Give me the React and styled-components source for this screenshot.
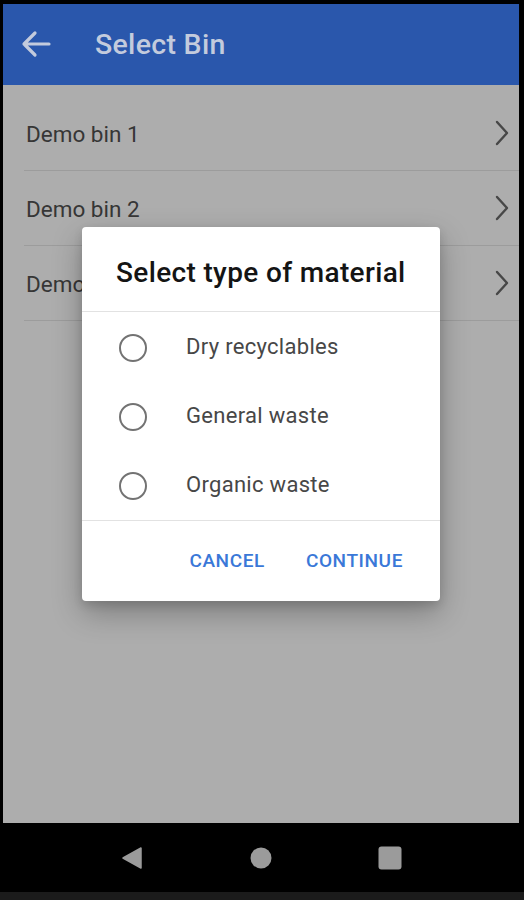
import React from 'react';
import styled, { createGlobalStyle } from 'styled-components';

const GlobalStyle = createGlobalStyle`
  html, body {
    margin: 0;
    padding: 0;
    background: #000;
  }
  * {
    box-sizing: border-box;
  }
`;

const Device = styled.div`
  width: 524px;
  height: 900px;
  background: #000;
  display: flex;
  flex-direction: column;
  font-family: Roboto, "Noto Sans", sans-serif;
  overflow: hidden;
`;

const Screen = styled.div`
  flex: 1;
  margin: 4px 5px 0 3px;
  display: flex;
  flex-direction: column;
  min-height: 0;
`;

const AppBar = styled.header`
  height: 81px;
  background: #2a57ac;
  display: flex;
  align-items: center;
  padding-left: 15px;
  gap: 41px;
  flex-shrink: 0;
`;

const BackButton = styled.div`
  width: 36px;
  height: 36px;
  display: flex;
  align-items: center;
  justify-content: center;
  margin-top: -1px;
`;

const Title = styled.h1`
  margin: 0;
  font-size: 28.5px;
  font-weight: 500;
  color: #c3cbdd;
  letter-spacing: 0.3px;
  margin-top: 0;
`;

const Content = styled.main`
  flex: 1;
  position: relative;
  background: #adadad;
`;

const List = styled.ul`
  list-style: none;
  margin: 0;
  padding: 11px 0 0 0;
`;

const Row = styled.li`
  height: 75px;
  margin-left: 21px;
  padding: 0 9px 0 2px;
  border-bottom: 1px solid #9c9c9c;
  display: flex;
  align-items: center;
  justify-content: space-between;
`;

const RowText = styled.span`
  font-size: 22.5px;
  color: #363636;
  margin-top: 1px;
`;

const Dialog = styled.div`
  position: absolute;
  left: 79px;
  top: 142px;
  width: 358px;
  background: #fff;
  border-radius: 4px;
  box-shadow: 0 12px 30px rgba(0, 0, 0, 0.28), 0 4px 10px rgba(0, 0, 0, 0.12);
  display: flex;
  flex-direction: column;
`;

const DialogTitle = styled.h2`
  margin: 0;
  padding: 32px 0 24px 34px;
  font-size: 28px;
  line-height: 28px;
  font-weight: 500;
  letter-spacing: 0.35px;
  color: #141414;
  border-bottom: 1px solid #e2e2e2;
`;

const Options = styled.div`
  padding-top: 1px;
  border-bottom: 1px solid #e2e2e2;
`;

const Option = styled.label`
  height: 69px;
  display: flex;
  align-items: center;
  padding-left: 37px;
  gap: 39px;
`;

const Radio = styled.span`
  width: 28px;
  height: 28px;
  border: 2px solid #737373;
  border-radius: 50%;
  flex-shrink: 0;
`;

const OptionText = styled.span`
  font-size: 22px;
  color: #474747;
  letter-spacing: 0.3px;
  margin-top: -2px;
`;

const Actions = styled.div`
  height: 80px;
  display: flex;
  align-items: center;
  justify-content: flex-end;
  padding-right: 37px;
  gap: 41px;
`;

const ActionButton = styled.button`
  border: none;
  background: none;
  padding: 0;
  font-family: inherit;
  font-size: 19px;
  font-weight: 500;
  text-transform: uppercase;
  letter-spacing: 0.6px;
  color: #3a78d8;
  margin-top: -1px;
`;

const NavBar = styled.nav`
  height: 69px;
  background: #000;
  display: flex;
  justify-content: center;
  align-items: center;
  flex-shrink: 0;
`;

const NavButton = styled.div`
  width: 129px;
  display: flex;
  justify-content: center;
  align-items: center;
  margin-top: 1px;
`;

const BottomStrip = styled.div`
  height: 8px;
  background: #1b1b1b;
  flex-shrink: 0;
`;

const Chevron = () => (
  <svg width="16" height="26" viewBox="0 0 16 26" fill="none">
    <path d="M3 2 L13 13 L3 24" stroke="#474747" strokeWidth="2.4" strokeLinecap="round" strokeLinejoin="round" />
  </svg>
);

const ArrowBack = () => (
  <svg width="30" height="28" viewBox="0 0 30 28" fill="none">
    <path d="M28 14 H3 M14 3 L3 14 L14 25" stroke="#c3cbdd" strokeWidth="3.2" strokeLinecap="round" strokeLinejoin="round" />
  </svg>
);

const bins = ['Demo bin 1', 'Demo bin 2', 'Demo bin 3'];
const materials = ['Dry recyclables', 'General waste', 'Organic waste'];

export default function App() {
  return (
    <>
      <GlobalStyle />
      <Device>
        <Screen>
          <AppBar>
            <BackButton>
              <ArrowBack />
            </BackButton>
            <Title>Select Bin</Title>
          </AppBar>
          <Content>
            <List>
              {bins.map((b) => (
                <Row key={b}>
                  <RowText>{b}</RowText>
                  <Chevron />
                </Row>
              ))}
            </List>
            <Dialog>
              <DialogTitle>Select type of material</DialogTitle>
              <Options>
                {materials.map((m) => (
                  <Option key={m}>
                    <Radio />
                    <OptionText>{m}</OptionText>
                  </Option>
                ))}
              </Options>
              <Actions>
                <ActionButton>Cancel</ActionButton>
                <ActionButton>Continue</ActionButton>
              </Actions>
            </Dialog>
          </Content>
          <NavBar>
            <NavButton>
              <svg width="22" height="24" viewBox="0 0 22 24">
                <path d="M20 2 L20 22 L2 12 Z" fill="#9b9b9b" stroke="#9b9b9b" strokeWidth="1.5" strokeLinejoin="round" />
              </svg>
            </NavButton>
            <NavButton>
              <svg width="22" height="22" viewBox="0 0 22 22">
                <circle cx="11" cy="11" r="10.5" fill="#9b9b9b" />
              </svg>
            </NavButton>
            <NavButton>
              <svg width="24" height="24" viewBox="0 0 24 24">
                <rect x="0.5" y="0.5" width="23" height="23" rx="3" fill="#9b9b9b" />
              </svg>
            </NavButton>
          </NavBar>
        </Screen>
        <BottomStrip />
      </Device>
    </>
  );
}
